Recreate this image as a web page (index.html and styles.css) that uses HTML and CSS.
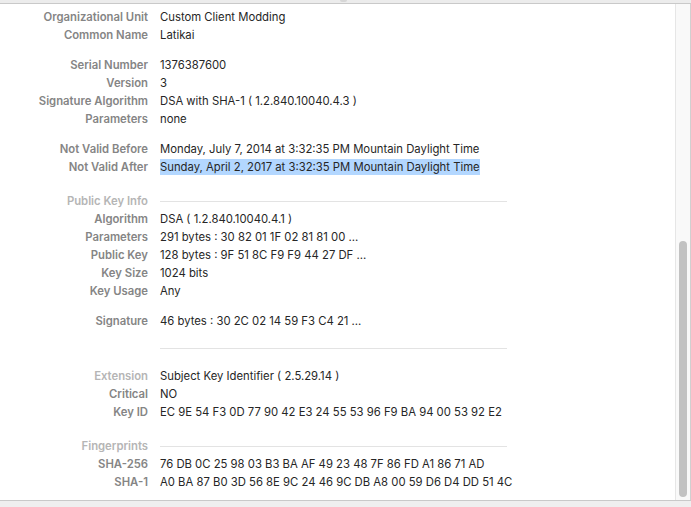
FILE: index.html
```html
<!DOCTYPE html>
<html lang="en">
<head>
    <meta charset="UTF-8">
    <title>Certificate Details</title>
    <link rel="stylesheet" href="styles.css">
</head>
<body>

<div class="top-bar"><span class="grip"></span></div>

<div class="window">
    <div class="details">
        <div class="row"><span class="label">Organizational Unit</span><span class="value">Custom Client Modding</span></div>
        <div class="row"><span class="label">Common Name</span><span class="value">Latikai</span></div>

        <div class="row group"><span class="label">Serial Number</span><span class="value">1376387600</span></div>
        <div class="row"><span class="label">Version</span><span class="value">3</span></div>
        <div class="row"><span class="label">Signature Algorithm</span><span class="value">DSA with SHA-1 ( 1.2.840.10040.4.3 )</span></div>
        <div class="row"><span class="label">Parameters</span><span class="value">none</span></div>

        <div class="row group"><span class="label">Not Valid Before</span><span class="value">Monday, July 7, 2014 at 3:32:35 PM Mountain Daylight Time</span></div>
        <div class="row"><span class="label">Not Valid After</span><span class="value"><span class="selected">Sunday, April 2, 2017 at 3:32:35 PM Mountain Daylight Time</span></span></div>

        <div class="row section"><span class="label">Public Key Info</span><span class="value"><span class="rule"></span></span></div>
        <div class="row"><span class="label">Algorithm</span><span class="value">DSA ( 1.2.840.10040.4.1 )</span></div>
        <div class="row"><span class="label">Parameters</span><span class="value">291 bytes : 30 82 01 1F 02 81 81 00 …</span></div>
        <div class="row"><span class="label">Public Key</span><span class="value">128 bytes : 9F 51 8C F9 F9 44 27 DF …</span></div>
        <div class="row"><span class="label">Key Size</span><span class="value">1024 bits</span></div>
        <div class="row"><span class="label">Key Usage</span><span class="value">Any</span></div>

        <div class="row group"><span class="label">Signature</span><span class="value">46 bytes : 30 2C 02 14 59 F3 C4 21 …</span></div>

        <div class="row divider"><span class="label"></span><span class="value"><span class="rule"></span></span></div>

        <div class="row ext"><span class="label light">Extension</span><span class="value">Subject Key Identifier ( 2.5.29.14 )</span></div>
        <div class="row"><span class="label">Critical</span><span class="value">NO</span></div>
        <div class="row"><span class="label">Key ID</span><span class="value">EC 9E 54 F3 0D 77 90 42 E3 24 55 53 96 F9 BA 94 00 53 92 E2</span></div>

        <div class="row section"><span class="label">Fingerprints</span><span class="value"><span class="rule"></span></span></div>
        <div class="row"><span class="label">SHA-256</span><span class="value">76 DB 0C 25 98 03 B3 BA AF 49 23 48 7F 86 FD A1 86 71 AD</span></div>
        <div class="row"><span class="label">SHA-1</span><span class="value">A0 BA 87 B0 3D 56 8E 9C 24 46 9C DB A8 00 59 D6 D4 DD 51 4C</span></div>
    </div>

    <div class="scrollbar">
        <div class="thumb"></div>
    </div>
</div>

<div class="bottom-bar"></div>

</body>
</html>
```

FILE: styles.css
```css
html, body {
    margin: 0;
    padding: 0;
    height: 100%;
}

body {
    font-family: Inter, "Noto Sans", sans-serif;
    font-size: 11.3px;
    color: #262626;
    background: #fff;
    display: flex;
    flex-direction: column;
    overflow: hidden;
}

.top-bar {
    height: 3px;
    background: #ececec;
    border-bottom: 1px solid #c9c9c9;
    position: relative;
}

.grip {
    position: absolute;
    left: 340px;
    top: 0;
    width: 7px;
    height: 2px;
    background: #d6d6d6;
    border-radius: 0 0 3px 3px;
}

.window {
    flex: 1;
    display: flex;
    min-height: 0;
    background: #fff;
}

.details {
    flex: 1;
    padding-top: 4px;
}

.row {
    display: grid;
    grid-template-columns: 148px 1fr;
    column-gap: 12px;
    height: 18px;
    line-height: 18px;
    white-space: nowrap;
}

.row.group {
    margin-top: 12px;
}

.row.section {
    margin-top: 16px;
}

.row.divider {
    margin-top: 9px;
}

.row.ext {
    margin-top: 10px;
}

.label {
    text-align: right;
    color: #858585;
    font-weight: 600;
}

.section .label, .label.light {
    color: #b5b5b5;
}

.value {
    display: flex;
    align-items: center;
}

.rule {
    display: block;
    width: 347px;
    height: 1px;
    background: #e3e3e3;
}

.selected {
    display: inline-block;
    line-height: 16px;
    background: #b3d7ff;
}

.scrollbar {
    width: 14px;
    background: #f9f9f9;
    border-left: 1px solid #e6e6e6;
    border-right: 1px solid #d0d0d0;
    display: flex;
    flex-direction: column;
    justify-content: flex-end;
    padding-bottom: 3px;
}

.thumb {
    height: 256px;
    margin: 0 3px;
    background: #c2c2c2;
    border-radius: 4px;
}

.bottom-bar {
    height: 6px;
    background: #efefef;
    border-top: 1px solid #c9c9c9;
}
```
